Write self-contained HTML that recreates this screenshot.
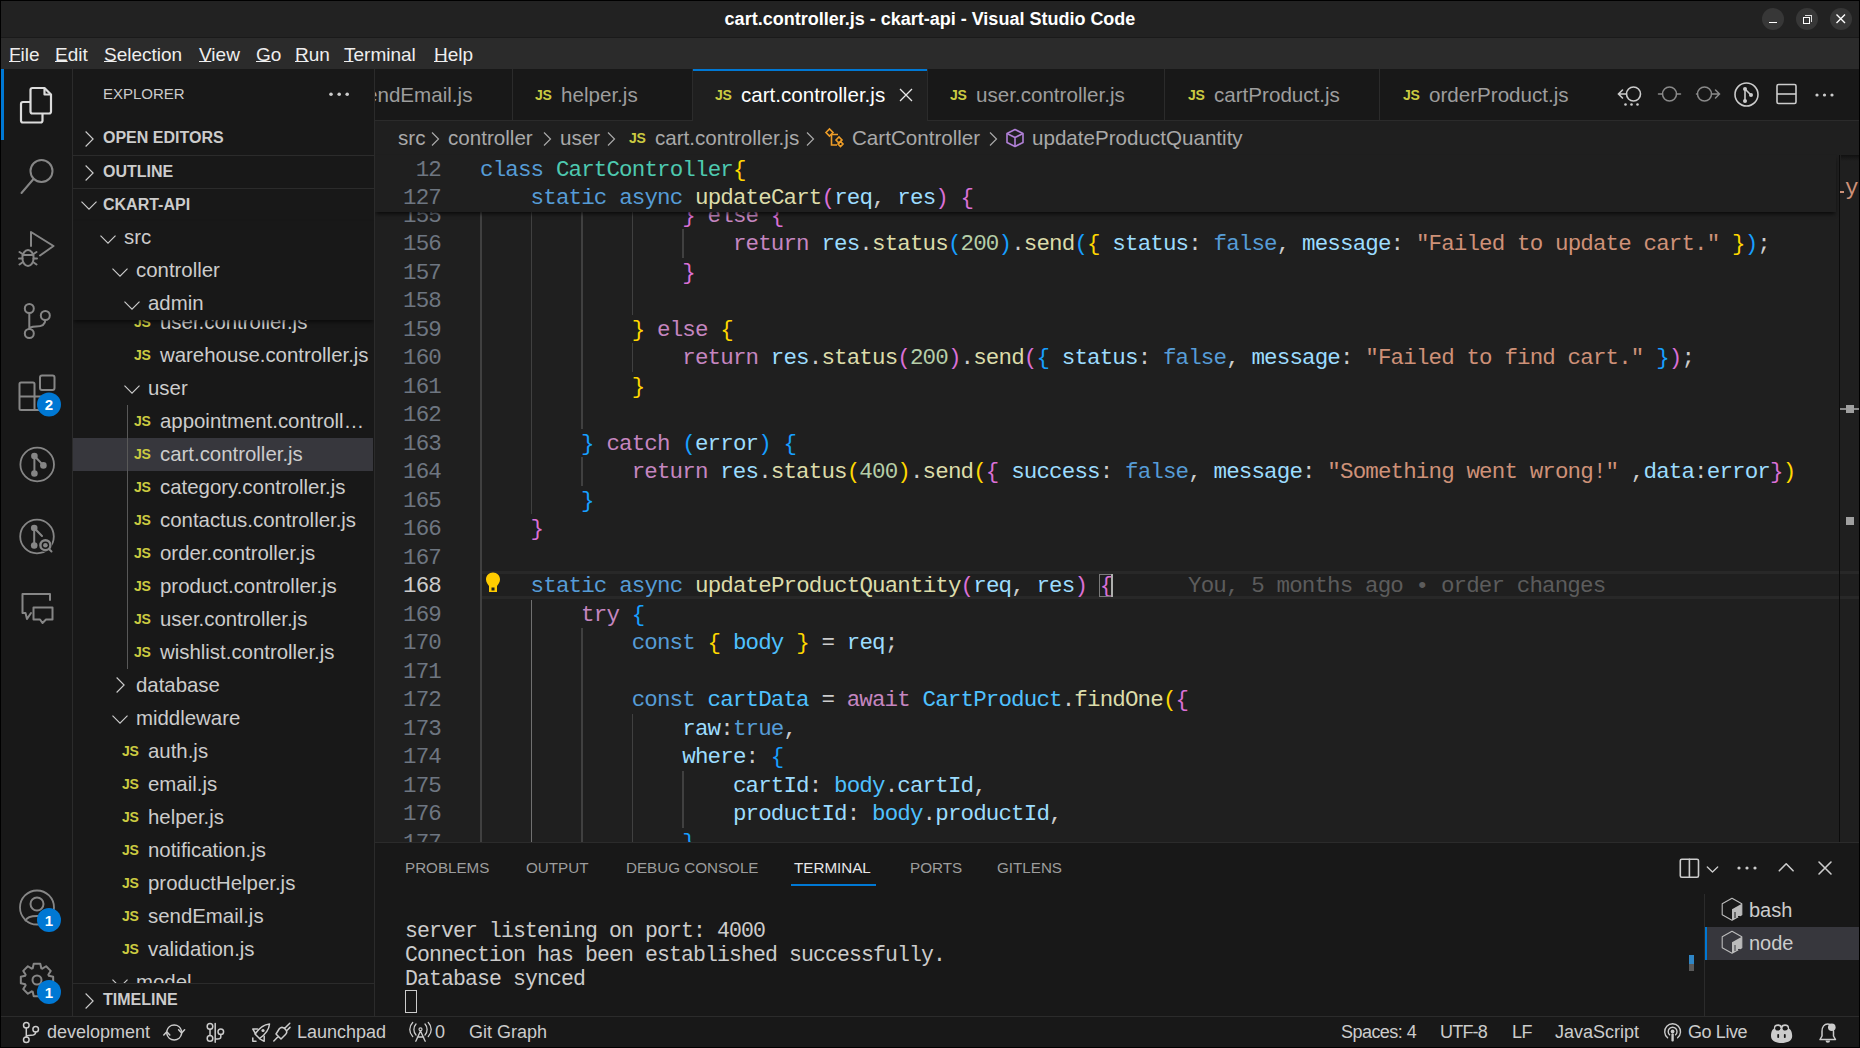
<!DOCTYPE html>
<html><head><meta charset="utf-8"><style>
*{margin:0;padding:0;box-sizing:border-box}
html,body{width:1860px;height:1048px;overflow:hidden;background:#000;font-family:"Liberation Sans",sans-serif;color:#cccccc;position:relative}
.abs{position:absolute}
#title{position:absolute;left:1px;top:1px;width:1858px;height:36px;background:#222222}
#menubar{position:absolute;left:1px;top:38px;width:1858px;height:31px;background:#2b2b2b}
.mi{position:absolute;top:0.8px;height:31px;line-height:31px;font-size:19px;color:#eeeeee}
.mi u{text-decoration:underline;text-underline-offset:0px;text-decoration-thickness:1px}
#act{position:absolute;left:1px;top:69px;width:72px;height:947px;background:#181818;border-right:1px solid #2b2b2b}
#side{position:absolute;left:73px;top:69px;width:302px;height:947px;background:#181818;border-right:1px solid #2b2b2b;overflow:hidden}
#editor{position:absolute;left:375px;top:69px;width:1484px;height:773px;background:#1f1f1f;overflow:hidden}
#panel{position:absolute;left:375px;top:842px;width:1484px;height:174px;background:#181818;border-top:1px solid #2b2b2b}
#status{position:absolute;left:1px;top:1016px;width:1858px;height:31px;background:#181818;border-top:1px solid #2b2b2b}
.ln{position:absolute;left:0;width:441px;transform:translateY(1.2px);text-align:right;height:28.5px;line-height:28.5px;font-family:"Liberation Mono",monospace;font-size:22.5px;letter-spacing:-0.857px;color:#6e7681}
.cl{position:absolute;transform:translateY(1.2px);height:28.5px;line-height:28.5px;font-family:"Liberation Mono",monospace;font-size:22.5px;letter-spacing:-0.857px;color:#cccccc;white-space:pre}
.ig{position:absolute;width:1.5px;height:28.5px}
.tl{position:absolute;height:33px;line-height:33px;font-size:20.4px;color:#cccccc;white-space:pre}
.jsi{position:absolute;font-size:14px;font-weight:bold;color:#cbcb41;line-height:18px;height:18px;letter-spacing:-0.4px}
.chev{position:absolute;width:16px;height:16px}
.chev svg{display:block}
.sech{position:absolute;left:0;width:301px;height:33px;font-size:16px;font-weight:bold;line-height:33px;color:#cccccc}
.term{position:absolute;font-family:"Liberation Mono",monospace;font-size:21.5px;letter-spacing:-0.9px;line-height:24px;color:#cccccc;white-space:pre}
</style></head><body>
<div id="title">
  <div class="abs" style="left:0;width:1858px;top:0;height:36px;line-height:36px;text-align:center;font-weight:bold;font-size:18px;color:#ffffff">cart.controller.js - ckart-api - Visual Studio Code</div>
  <div class="abs" style="left:1761px;top:7px;width:22px;height:22px;border-radius:50%;background:#373737"></div>
  <div class="abs" style="left:1768px;top:20.5px;width:8px;height:1.2px;background:#fff"></div>
  <div class="abs" style="left:1795px;top:7px;width:22px;height:22px;border-radius:50%;background:#373737"></div>
  <div class="abs" style="left:1802px;top:16px;width:7px;height:7px;border:1.3px solid #fff"></div>
  <div class="abs" style="left:1804px;top:14px;width:7px;height:7px;border-top:1px solid #ddd;border-right:1px solid #ddd"></div>
  <div class="abs" style="left:1829px;top:7px;width:22px;height:22px;border-radius:50%;background:#373737"></div>
  <svg class="abs" style="left:1834px;top:12px" width="12" height="12" viewBox="0 0 12 12"><path d="M1.5 1.5L10 10M10 1.5L1.5 10" stroke="#fff" stroke-width="1.4"/></svg>
</div>
<div class="abs" style="left:1px;top:37px;width:1858px;height:1px;background:#1a1a1a"></div>
<div id="menubar">
  <div class="mi" style="left:8px"><u>F</u>ile</div>
  <div class="mi" style="left:54px"><u>E</u>dit</div>
  <div class="mi" style="left:103px"><u>S</u>election</div>
  <div class="mi" style="left:198px"><u>V</u>iew</div>
  <div class="mi" style="left:255px"><u>G</u>o</div>
  <div class="mi" style="left:294px"><u>R</u>un</div>
  <div class="mi" style="left:343px"><u>T</u>erminal</div>
  <div class="mi" style="left:433px"><u>H</u>elp</div>
</div>
<div id="act">
  <div class="abs" style="left:0;top:0;width:3px;height:71px;background:#0078d4"></div>
</div>
<div id="side">
  <div class="abs" style="left:30px;top:0;height:50px;line-height:50px;font-size:15px;color:#cccccc">EXPLORER</div>
  <svg class="abs" style="left:250px;top:18px" width="30" height="14" viewBox="0 0 30 14"><g fill="#cccccc"><circle cx="8" cy="7.2" r="1.8"/><circle cx="16.2" cy="7.2" r="1.8"/><circle cx="24.2" cy="7.2" r="1.8"/></g></svg>
  <div class="sech" style="top:52px"><div class="chev" style="left:7.5px;top:10px"><svg width="16" height="16" viewBox="0 0 16 16"><path d="M4.6 0.5 L12.1 8 L4.6 15.5" fill="none" stroke="#cccccc" stroke-width="1.15"/></svg></div><span style="position:absolute;left:30px">OPEN EDITORS</span></div>
  <div class="sech" style="top:86px;border-top:1px solid #2b2b2b"><div class="chev" style="left:7.5px;top:8.5px"><svg width="16" height="16" viewBox="0 0 16 16"><path d="M4.6 0.5 L12.1 8 L4.6 15.5" fill="none" stroke="#cccccc" stroke-width="1.15"/></svg></div><span style="position:absolute;left:30px;top:-1px">OUTLINE</span></div>
  <div class="sech" style="top:119px;border-top:1px solid #2b2b2b"><div class="chev" style="left:7.5px;top:7px"><svg width="16" height="16" viewBox="0 0 16 16"><path d="M0.5 5.6 L8 13.1 L15.5 5.6" fill="none" stroke="#cccccc" stroke-width="1.15"/></svg></div><span style="position:absolute;left:30px;top:-1px">CKART-API</span></div>
  <div class="abs" style="left:0;top:0;width:300px;height:947px">
    <div class="abs" style="left:0;top:369px;width:300px;height:33px;background:#37373d"></div>
    <div class="abs" style="left:54px;top:336px;width:1px;height:264px;background:#585858"></div>
    <div class="abs" style="left:-73px;top:-69px"><div class="jsi" style="left:134px;top:313px">JS</div><div class="tl" style="left:160px;top:305.5px">user.controller.js</div><div class="jsi" style="left:134px;top:346px">JS</div><div class="tl" style="left:160px;top:338.5px">warehouse.controller.js</div><div class="chev" style="left:124px;top:380px"><svg width="16" height="16" viewBox="0 0 16 16"><path d="M0.5 5.6 L8 13.1 L15.5 5.6" fill="none" stroke="#cccccc" stroke-width="1.15"/></svg></div><div class="tl" style="left:148px;top:371.5px">user</div><div class="jsi" style="left:134px;top:412px">JS</div><div class="tl" style="left:160px;top:404.5px">appointment.controll…</div><div class="jsi" style="left:134px;top:445px">JS</div><div class="tl" style="left:160px;top:437.5px">cart.controller.js</div><div class="jsi" style="left:134px;top:478px">JS</div><div class="tl" style="left:160px;top:470.5px">category.controller.js</div><div class="jsi" style="left:134px;top:511px">JS</div><div class="tl" style="left:160px;top:503.5px">contactus.controller.js</div><div class="jsi" style="left:134px;top:544px">JS</div><div class="tl" style="left:160px;top:536.5px">order.controller.js</div><div class="jsi" style="left:134px;top:577px">JS</div><div class="tl" style="left:160px;top:569.5px">product.controller.js</div><div class="jsi" style="left:134px;top:610px">JS</div><div class="tl" style="left:160px;top:602.5px">user.controller.js</div><div class="jsi" style="left:134px;top:643px">JS</div><div class="tl" style="left:160px;top:635.5px">wishlist.controller.js</div><div class="chev" style="left:112px;top:677px"><svg width="16" height="16" viewBox="0 0 16 16"><path d="M4.6 0.5 L12.1 8 L4.6 15.5" fill="none" stroke="#cccccc" stroke-width="1.15"/></svg></div><div class="tl" style="left:136px;top:668.5px">database</div><div class="chev" style="left:112px;top:710px"><svg width="16" height="16" viewBox="0 0 16 16"><path d="M0.5 5.6 L8 13.1 L15.5 5.6" fill="none" stroke="#cccccc" stroke-width="1.15"/></svg></div><div class="tl" style="left:136px;top:701.5px">middleware</div><div class="jsi" style="left:122px;top:742px">JS</div><div class="tl" style="left:148px;top:734.5px">auth.js</div><div class="jsi" style="left:122px;top:775px">JS</div><div class="tl" style="left:148px;top:767.5px">email.js</div><div class="jsi" style="left:122px;top:808px">JS</div><div class="tl" style="left:148px;top:800.5px">helper.js</div><div class="jsi" style="left:122px;top:841px">JS</div><div class="tl" style="left:148px;top:833.5px">notification.js</div><div class="jsi" style="left:122px;top:874px">JS</div><div class="tl" style="left:148px;top:866.5px">productHelper.js</div><div class="jsi" style="left:122px;top:907px">JS</div><div class="tl" style="left:148px;top:899.5px">sendEmail.js</div><div class="jsi" style="left:122px;top:940px">JS</div><div class="tl" style="left:148px;top:932.5px">validation.js</div><div class="chev" style="left:112px;top:974px"><svg width="16" height="16" viewBox="0 0 16 16"><path d="M0.5 5.6 L8 13.1 L15.5 5.6" fill="none" stroke="#cccccc" stroke-width="1.15"/></svg></div><div class="tl" style="left:136px;top:965.5px">model</div></div>
  </div>
  <div class="abs" style="left:0;top:152px;width:301px;height:99px;background:#181818;box-shadow:0 3px 4px -1px rgba(0,0,0,0.6)">
    <div class="abs" style="left:-73px;top:-221px"><div class="chev" style="left:99.5px;top:229.5px"><svg width="16" height="16" viewBox="0 0 16 16"><path d="M0.5 5.6 L8 13.1 L15.5 5.6" fill="none" stroke="#cccccc" stroke-width="1.15"/></svg></div><div class="tl" style="left:124px;top:221.0px">src</div><div class="chev" style="left:112px;top:262.5px"><svg width="16" height="16" viewBox="0 0 16 16"><path d="M0.5 5.6 L8 13.1 L15.5 5.6" fill="none" stroke="#cccccc" stroke-width="1.15"/></svg></div><div class="tl" style="left:136px;top:254.0px">controller</div><div class="chev" style="left:124px;top:295.5px"><svg width="16" height="16" viewBox="0 0 16 16"><path d="M0.5 5.6 L8 13.1 L15.5 5.6" fill="none" stroke="#cccccc" stroke-width="1.15"/></svg></div><div class="tl" style="left:148px;top:287.0px">admin</div></div>
  </div>
  <div class="sech" style="top:914px;background:#181818;border-top:1px solid #2b2b2b"><div class="chev" style="left:7.5px;top:8.5px"><svg width="16" height="16" viewBox="0 0 16 16"><path d="M4.6 0.5 L12.1 8 L4.6 15.5" fill="none" stroke="#cccccc" stroke-width="1.15"/></svg></div><span style="position:absolute;left:30px;top:-1px">TIMELINE</span></div>
</div>
<div id="editor">
  <div class="abs" style="left:0;top:0;width:1485px;height:773px">
    <div class="abs" style="left:-375px;top:-69px">
      <div class="abs" style="left:482px;top:571px;width:1357px;height:28px;border-top:3px solid #282828;border-bottom:3px solid #282828"></div>
      <div class="ig" style="left:480.0px;top:200.5px;background:#404040"></div>
<div class="ig" style="left:530.6px;top:200.5px;background:#404040"></div>
<div class="ig" style="left:581.1px;top:200.5px;background:#404040"></div>
<div class="ig" style="left:631.7px;top:200.5px;background:#404040"></div>
<div class="ln" style="top:200.5px;color:#6e7681">155</div>
<div class="cl" style="top:200.5px;left:682.3px"><span style="color:#da70d6">}</span> <span style="color:#c586c0">else</span> <span style="color:#da70d6">{</span></div>
<div class="ig" style="left:480.0px;top:229.0px;background:#404040"></div>
<div class="ig" style="left:530.6px;top:229.0px;background:#404040"></div>
<div class="ig" style="left:581.1px;top:229.0px;background:#404040"></div>
<div class="ig" style="left:631.7px;top:229.0px;background:#404040"></div>
<div class="ig" style="left:682.3px;top:229.0px;background:#404040"></div>
<div class="ln" style="top:229.0px;color:#6e7681">156</div>
<div class="cl" style="top:229.0px;left:732.9px"><span style="color:#c586c0">return</span> <span style="color:#9cdcfe">res</span>.<span style="color:#dcdcaa">status</span><span style="color:#179fff">(</span><span style="color:#b5cea8">200</span><span style="color:#179fff">)</span>.<span style="color:#dcdcaa">send</span><span style="color:#179fff">(</span><span style="color:#ffd700">{</span> <span style="color:#9cdcfe">status</span>: <span style="color:#569cd6">false</span>, <span style="color:#9cdcfe">message</span>: <span style="color:#ce9178">&quot;Failed to update cart.&quot;</span> <span style="color:#ffd700">}</span><span style="color:#179fff">)</span>;</div>
<div class="ig" style="left:480.0px;top:257.5px;background:#404040"></div>
<div class="ig" style="left:530.6px;top:257.5px;background:#404040"></div>
<div class="ig" style="left:581.1px;top:257.5px;background:#404040"></div>
<div class="ig" style="left:631.7px;top:257.5px;background:#404040"></div>
<div class="ln" style="top:257.5px;color:#6e7681">157</div>
<div class="cl" style="top:257.5px;left:682.3px"><span style="color:#da70d6">}</span></div>
<div class="ig" style="left:480.0px;top:286.0px;background:#404040"></div>
<div class="ig" style="left:530.6px;top:286.0px;background:#404040"></div>
<div class="ig" style="left:581.1px;top:286.0px;background:#404040"></div>
<div class="ig" style="left:631.7px;top:286.0px;background:#404040"></div>
<div class="ln" style="top:286.0px;color:#6e7681">158</div>
<div class="cl" style="top:286.0px;left:480.0px"></div>
<div class="ig" style="left:480.0px;top:314.5px;background:#404040"></div>
<div class="ig" style="left:530.6px;top:314.5px;background:#404040"></div>
<div class="ig" style="left:581.1px;top:314.5px;background:#404040"></div>
<div class="ln" style="top:314.5px;color:#6e7681">159</div>
<div class="cl" style="top:314.5px;left:631.7px"><span style="color:#ffd700">}</span> <span style="color:#c586c0">else</span> <span style="color:#ffd700">{</span></div>
<div class="ig" style="left:480.0px;top:343.0px;background:#404040"></div>
<div class="ig" style="left:530.6px;top:343.0px;background:#404040"></div>
<div class="ig" style="left:581.1px;top:343.0px;background:#404040"></div>
<div class="ig" style="left:631.7px;top:343.0px;background:#404040"></div>
<div class="ln" style="top:343.0px;color:#6e7681">160</div>
<div class="cl" style="top:343.0px;left:682.3px"><span style="color:#c586c0">return</span> <span style="color:#9cdcfe">res</span>.<span style="color:#dcdcaa">status</span><span style="color:#da70d6">(</span><span style="color:#b5cea8">200</span><span style="color:#da70d6">)</span>.<span style="color:#dcdcaa">send</span><span style="color:#da70d6">(</span><span style="color:#179fff">{</span> <span style="color:#9cdcfe">status</span>: <span style="color:#569cd6">false</span>, <span style="color:#9cdcfe">message</span>: <span style="color:#ce9178">&quot;Failed to find cart.&quot;</span> <span style="color:#179fff">}</span><span style="color:#da70d6">)</span>;</div>
<div class="ig" style="left:480.0px;top:371.5px;background:#404040"></div>
<div class="ig" style="left:530.6px;top:371.5px;background:#404040"></div>
<div class="ig" style="left:581.1px;top:371.5px;background:#404040"></div>
<div class="ln" style="top:371.5px;color:#6e7681">161</div>
<div class="cl" style="top:371.5px;left:631.7px"><span style="color:#ffd700">}</span></div>
<div class="ig" style="left:480.0px;top:400.0px;background:#404040"></div>
<div class="ig" style="left:530.6px;top:400.0px;background:#404040"></div>
<div class="ig" style="left:581.1px;top:400.0px;background:#404040"></div>
<div class="ln" style="top:400.0px;color:#6e7681">162</div>
<div class="cl" style="top:400.0px;left:480.0px"></div>
<div class="ig" style="left:480.0px;top:428.5px;background:#404040"></div>
<div class="ig" style="left:530.6px;top:428.5px;background:#404040"></div>
<div class="ln" style="top:428.5px;color:#6e7681">163</div>
<div class="cl" style="top:428.5px;left:581.1px"><span style="color:#179fff">}</span> <span style="color:#c586c0">catch</span> <span style="color:#179fff">(</span><span style="color:#9cdcfe">error</span><span style="color:#179fff">)</span> <span style="color:#179fff">{</span></div>
<div class="ig" style="left:480.0px;top:457.0px;background:#404040"></div>
<div class="ig" style="left:530.6px;top:457.0px;background:#404040"></div>
<div class="ig" style="left:581.1px;top:457.0px;background:#404040"></div>
<div class="ln" style="top:457.0px;color:#6e7681">164</div>
<div class="cl" style="top:457.0px;left:631.7px"><span style="color:#c586c0">return</span> <span style="color:#9cdcfe">res</span>.<span style="color:#dcdcaa">status</span><span style="color:#ffd700">(</span><span style="color:#b5cea8">400</span><span style="color:#ffd700">)</span>.<span style="color:#dcdcaa">send</span><span style="color:#ffd700">(</span><span style="color:#da70d6">{</span> <span style="color:#9cdcfe">success</span>: <span style="color:#569cd6">false</span>, <span style="color:#9cdcfe">message</span>: <span style="color:#ce9178">&quot;Something went wrong!&quot;</span> ,<span style="color:#9cdcfe">data</span>:<span style="color:#9cdcfe">error</span><span style="color:#da70d6">}</span><span style="color:#ffd700">)</span></div>
<div class="ig" style="left:480.0px;top:485.5px;background:#404040"></div>
<div class="ig" style="left:530.6px;top:485.5px;background:#404040"></div>
<div class="ln" style="top:485.5px;color:#6e7681">165</div>
<div class="cl" style="top:485.5px;left:581.1px"><span style="color:#179fff">}</span></div>
<div class="ig" style="left:480.0px;top:514.0px;background:#404040"></div>
<div class="ln" style="top:514.0px;color:#6e7681">166</div>
<div class="cl" style="top:514.0px;left:530.6px"><span style="color:#da70d6">}</span></div>
<div class="ig" style="left:480.0px;top:542.5px;background:#404040"></div>
<div class="ln" style="top:542.5px;color:#6e7681">167</div>
<div class="cl" style="top:542.5px;left:480.0px"></div>
<div class="ig" style="left:480.0px;top:571.0px;background:#404040"></div>
<div class="ln" style="top:571.0px;color:#cccccc">168</div>
<div class="cl" style="top:571.0px;left:530.6px"><span style="color:#569cd6">static</span> <span style="color:#569cd6">async</span> <span style="color:#dcdcaa">updateProductQuantity</span><span style="color:#da70d6">(</span><span style="color:#9cdcfe">req</span>, <span style="color:#9cdcfe">res</span><span style="color:#da70d6">)</span> <span style="color:#da70d6">{</span></div>
<div class="ig" style="left:480.0px;top:599.5px;background:#404040"></div>
<div class="ig" style="left:530.6px;top:599.5px;background:#707070"></div>
<div class="ln" style="top:599.5px;color:#6e7681">169</div>
<div class="cl" style="top:599.5px;left:581.1px"><span style="color:#c586c0">try</span> <span style="color:#179fff">{</span></div>
<div class="ig" style="left:480.0px;top:628.0px;background:#404040"></div>
<div class="ig" style="left:530.6px;top:628.0px;background:#707070"></div>
<div class="ig" style="left:581.1px;top:628.0px;background:#404040"></div>
<div class="ln" style="top:628.0px;color:#6e7681">170</div>
<div class="cl" style="top:628.0px;left:631.7px"><span style="color:#569cd6">const</span> <span style="color:#ffd700">{</span> <span style="color:#4fc1ff">body</span> <span style="color:#ffd700">}</span> = <span style="color:#9cdcfe">req</span>;</div>
<div class="ig" style="left:480.0px;top:656.5px;background:#404040"></div>
<div class="ig" style="left:530.6px;top:656.5px;background:#707070"></div>
<div class="ig" style="left:581.1px;top:656.5px;background:#404040"></div>
<div class="ln" style="top:656.5px;color:#6e7681">171</div>
<div class="cl" style="top:656.5px;left:480.0px"></div>
<div class="ig" style="left:480.0px;top:685.0px;background:#404040"></div>
<div class="ig" style="left:530.6px;top:685.0px;background:#707070"></div>
<div class="ig" style="left:581.1px;top:685.0px;background:#404040"></div>
<div class="ln" style="top:685.0px;color:#6e7681">172</div>
<div class="cl" style="top:685.0px;left:631.7px"><span style="color:#569cd6">const</span> <span style="color:#4fc1ff">cartData</span> = <span style="color:#c586c0">await</span> <span style="color:#4fc1ff">CartProduct</span>.<span style="color:#dcdcaa">findOne</span><span style="color:#ffd700">(</span><span style="color:#da70d6">{</span></div>
<div class="ig" style="left:480.0px;top:713.5px;background:#404040"></div>
<div class="ig" style="left:530.6px;top:713.5px;background:#707070"></div>
<div class="ig" style="left:581.1px;top:713.5px;background:#404040"></div>
<div class="ig" style="left:631.7px;top:713.5px;background:#404040"></div>
<div class="ln" style="top:713.5px;color:#6e7681">173</div>
<div class="cl" style="top:713.5px;left:682.3px"><span style="color:#9cdcfe">raw</span>:<span style="color:#569cd6">true</span>,</div>
<div class="ig" style="left:480.0px;top:742.0px;background:#404040"></div>
<div class="ig" style="left:530.6px;top:742.0px;background:#707070"></div>
<div class="ig" style="left:581.1px;top:742.0px;background:#404040"></div>
<div class="ig" style="left:631.7px;top:742.0px;background:#404040"></div>
<div class="ln" style="top:742.0px;color:#6e7681">174</div>
<div class="cl" style="top:742.0px;left:682.3px"><span style="color:#9cdcfe">where</span>: <span style="color:#179fff">{</span></div>
<div class="ig" style="left:480.0px;top:770.5px;background:#404040"></div>
<div class="ig" style="left:530.6px;top:770.5px;background:#707070"></div>
<div class="ig" style="left:581.1px;top:770.5px;background:#404040"></div>
<div class="ig" style="left:631.7px;top:770.5px;background:#404040"></div>
<div class="ig" style="left:682.3px;top:770.5px;background:#404040"></div>
<div class="ln" style="top:770.5px;color:#6e7681">175</div>
<div class="cl" style="top:770.5px;left:732.9px"><span style="color:#9cdcfe">cartId</span>: <span style="color:#4fc1ff">body</span>.<span style="color:#9cdcfe">cartId</span>,</div>
<div class="ig" style="left:480.0px;top:799.0px;background:#404040"></div>
<div class="ig" style="left:530.6px;top:799.0px;background:#707070"></div>
<div class="ig" style="left:581.1px;top:799.0px;background:#404040"></div>
<div class="ig" style="left:631.7px;top:799.0px;background:#404040"></div>
<div class="ig" style="left:682.3px;top:799.0px;background:#404040"></div>
<div class="ln" style="top:799.0px;color:#6e7681">176</div>
<div class="cl" style="top:799.0px;left:732.9px"><span style="color:#9cdcfe">productId</span>: <span style="color:#4fc1ff">body</span>.<span style="color:#9cdcfe">productId</span>,</div>
<div class="ig" style="left:480.0px;top:827.5px;background:#404040"></div>
<div class="ig" style="left:530.6px;top:827.5px;background:#707070"></div>
<div class="ig" style="left:581.1px;top:827.5px;background:#404040"></div>
<div class="ig" style="left:631.7px;top:827.5px;background:#404040"></div>
<div class="ln" style="top:827.5px;color:#6e7681">177</div>
<div class="cl" style="top:827.5px;left:682.3px"><span style="color:#179fff">}</span></div>
      <div class="abs" style="left:1099px;top:574px;width:13px;height:23px;border:1px solid #7a7a7a"></div>
      <div class="abs" style="left:1111px;top:574px;width:2px;height:23px;background:#aeafad"></div>
      <div class="cl" style="left:1188px;top:571px;color:#5c5c5c">You, 5 months ago • order changes</div>
      <svg class="abs" style="left:484px;top:571px" width="18" height="26" viewBox="0 0 18 26"><path d="M9 1.5 C5 1.5 2 4.5 2 8.5 C2 11.5 4 13.5 5 15 V21 H13 V15 C14 13.5 16 11.5 16 8.5 C16 4.5 13 1.5 9 1.5 Z" fill="#ffcc00"/><rect x="7.5" y="16.5" width="3" height="3" fill="#1f1f1f"/></svg>
    </div>
  </div>
  <div class="abs" style="left:0;top:85.5px;width:1461px;height:57px;background:#1f1f1f;box-shadow:0 3px 4px -1px rgba(0,0,0,0.7)">
    <div class="abs" style="left:-375px;top:-154.5px">
<div class="ln" style="top:154.5px">12</div>
<div class="cl" style="top:154.5px;left:480px"><span style="color:#569cd6">class</span> <span style="color:#4ec9b0">CartController</span><span style="color:#ffd700">{</span></div>
<div class="ln" style="top:183px">127</div>
<div class="cl" style="top:183px;left:530.6px"><span style="color:#569cd6">static</span> <span style="color:#569cd6">async</span> <span style="color:#dcdcaa">updateCart</span><span style="color:#da70d6">(</span><span style="color:#9cdcfe">req</span>, <span style="color:#9cdcfe">res</span><span style="color:#da70d6">)</span> <span style="color:#da70d6">{</span></div>
</div>
  </div>
  <div class="abs" style="left:1464px;top:86px;width:20px;height:687px;background:#1f1f1f;border-left:1px solid #0c0c0c"></div>
  <div class="abs" style="left:1466px;top:86px;width:18px;height:6px;background:linear-gradient(#111,#1f1f1f)"></div>
  <div class="abs" style="left:1465px;top:502px;width:19px;height:28px;border-top:3px solid #282828;border-bottom:3px solid #282828"></div>
  <div class="cl" style="left:1470px;top:104px;color:#ce9178">y</div><div class="abs" style="left:1465px;top:122px;width:4px;height:1.5px;background:#ce9178"></div>
  <div class="abs" style="left:1465px;top:338.5px;width:19px;height:2.5px;background:#8a8a8a"></div>
  <div class="abs" style="left:1471px;top:336px;width:8px;height:8px;background:#a0a0a0"></div>
  <div class="abs" style="left:1471px;top:448px;width:8px;height:8px;background:#a0a0a0"></div>
</div>
<div class="abs" style="left:375px;top:69px;width:1484px;height:85px;background:#1f1f1f"></div>
<div class="abs" style="left:375px;top:69px;width:1484px;height:52px;background:#181818;border-bottom:1px solid #2b2b2b"></div>
<div class="abs" style="left:375px;top:69px;width:138px;height:52px;background:#181818;border-right:1px solid #2b2b2b;border-bottom:1px solid #2b2b2b;overflow:hidden"><div class="abs" style="left:-9px;top:0;height:52px;line-height:52px;font-size:20.6px;white-space:pre;color:#9d9d9d">endEmail.js</div></div><div class="abs" style="left:513px;top:69px;width:180px;height:52px;background:#181818;border-right:1px solid #2b2b2b;border-bottom:1px solid #2b2b2b;overflow:hidden"><div class="jsi" style="left:22px;top:17px">JS</div><div class="abs" style="left:48px;top:0;height:52px;line-height:52px;font-size:20.6px;white-space:pre;color:#9d9d9d">helper.js</div></div><div class="abs" style="left:693px;top:69px;width:235px;height:52px;background:#1f1f1f;border-right:1px solid #2b2b2b;overflow:hidden"><div class="abs" style="left:0;top:0;width:100%;height:2px;background:#0078d4"></div><div class="jsi" style="left:22px;top:17px">JS</div><div class="abs" style="left:48px;top:0;height:52px;line-height:52px;font-size:20.6px;white-space:pre;color:#ffffff">cart.controller.js</div><svg class="abs" style="left:205px;top:87px;margin-top:-69px" width="16" height="16" viewBox="0 0 16 16"><path d="M2 2 L14 14 M14 2 L2 14" stroke="#e8e8e8" stroke-width="1.3"/></svg></div><div class="abs" style="left:928px;top:69px;width:237px;height:52px;background:#181818;border-right:1px solid #2b2b2b;border-bottom:1px solid #2b2b2b;overflow:hidden"><div class="jsi" style="left:22px;top:17px">JS</div><div class="abs" style="left:48px;top:0;height:52px;line-height:52px;font-size:20.6px;white-space:pre;color:#9d9d9d">user.controller.js</div></div><div class="abs" style="left:1165px;top:69px;width:215px;height:52px;background:#181818;border-right:1px solid #2b2b2b;border-bottom:1px solid #2b2b2b;overflow:hidden"><div class="jsi" style="left:23px;top:17px">JS</div><div class="abs" style="left:49px;top:0;height:52px;line-height:52px;font-size:20.6px;white-space:pre;color:#9d9d9d">cartProduct.js</div></div><div class="abs" style="left:1380px;top:69px;width:213px;height:52px;background:#181818;border-right:none;border-bottom:1px solid #2b2b2b;overflow:hidden"><div class="jsi" style="left:23px;top:17px">JS</div><div class="abs" style="left:49px;top:0;height:52px;line-height:52px;font-size:20.6px;white-space:pre;color:#9d9d9d">orderProduct.js</div></div>

<svg class="abs" style="left:1600px;top:69px" width="259" height="52" viewBox="1600 69 259 52">
 <g fill="none" stroke="#cccccc" stroke-width="1.6" stroke-linecap="round">
  <circle cx="1633.5" cy="94" r="7"/><path d="M1626.5 94 H1618.5 M1622.5 90 L1618.5 94 L1622.5 98"/>
 </g>
 <g fill="#cccccc"><circle cx="1625.5" cy="104.5" r="1.3"/><circle cx="1631.5" cy="104.5" r="1.3"/><circle cx="1637.5" cy="104.5" r="1.3"/></g>
 <g fill="none" stroke="#8a8a8a" stroke-width="1.5" stroke-linecap="round">
  <circle cx="1669.5" cy="94" r="7"/><path d="M1658.5 94 H1662.5 M1676.5 94 H1680.5"/>
  <circle cx="1704.5" cy="94" r="7"/><path d="M1696.5 94 H1697.5 M1711.5 94 H1719.5 M1715.5 90 L1719.5 94 L1715.5 98"/>
 </g>
 <g fill="none" stroke="#cccccc" stroke-width="1.6">
  <circle cx="1746.5" cy="94.5" r="11.5"/>
  <path d="M1745 89 V101 M1745 89 L1751 95"/>
  <rect x="1777" y="84.5" width="19" height="19" rx="1.5"/><path d="M1777 94 H1796"/>
 </g>
 <g fill="#cccccc"><circle cx="1745" cy="89" r="2"/><circle cx="1751" cy="95" r="2"/><circle cx="1745" cy="101" r="2"/>
  <circle cx="1817" cy="95" r="1.6"/><circle cx="1824.5" cy="95" r="1.6"/><circle cx="1832" cy="95" r="1.6"/></g>
</svg>
<div class="abs" style="left:398px;top:121.3px;height:33px;line-height:33px;font-size:20.6px;color:#a9a9a9;white-space:pre">src</div><svg class="abs" style="left:428.5px;top:130.5px" width="12" height="16" viewBox="0 0 12 16"><path d="M3 1.5 L9.5 8 L3 14.5" fill="none" stroke="#a9a9a9" stroke-width="1.2"/></svg><div class="abs" style="left:448px;top:121.3px;height:33px;line-height:33px;font-size:20.6px;color:#a9a9a9;white-space:pre">controller</div><svg class="abs" style="left:540.5px;top:130.5px" width="12" height="16" viewBox="0 0 12 16"><path d="M3 1.5 L9.5 8 L3 14.5" fill="none" stroke="#a9a9a9" stroke-width="1.2"/></svg><div class="abs" style="left:560px;top:121.3px;height:33px;line-height:33px;font-size:20.6px;color:#a9a9a9;white-space:pre">user</div><svg class="abs" style="left:604.5px;top:130.5px" width="12" height="16" viewBox="0 0 12 16"><path d="M3 1.5 L9.5 8 L3 14.5" fill="none" stroke="#a9a9a9" stroke-width="1.2"/></svg><div class="jsi" style="left:629px;top:129px">JS</div><div class="abs" style="left:655px;top:121.3px;height:33px;line-height:33px;font-size:20.6px;color:#a9a9a9;white-space:pre">cart.controller.js</div><svg class="abs" style="left:803.7px;top:130.5px" width="12" height="16" viewBox="0 0 12 16"><path d="M3 1.5 L9.5 8 L3 14.5" fill="none" stroke="#a9a9a9" stroke-width="1.2"/></svg><div class="abs" style="left:852px;top:121.3px;height:33px;line-height:33px;font-size:20.6px;color:#a9a9a9;white-space:pre">CartController</div><svg class="abs" style="left:986.5px;top:130.5px" width="12" height="16" viewBox="0 0 12 16"><path d="M3 1.5 L9.5 8 L3 14.5" fill="none" stroke="#a9a9a9" stroke-width="1.2"/></svg><div class="abs" style="left:1032px;top:121.3px;height:33px;line-height:33px;font-size:20.6px;color:#a9a9a9;white-space:pre">updateProductQuantity</div><svg class="abs" style="left:824px;top:127px" width="22" height="22" viewBox="0 0 22 22"><g fill="none" stroke="#ee9d28" stroke-width="1.6"><path d="M2 5.5 L5.5 2 L9 5.5 L5.5 9 Z"/><path d="M12 13 L15 10 L18 13 L15 16 Z"/><path d="M12 19 L14.5 16.5 L17 19 L14.5 21.5 Z" transform="translate(2 -2)"/><path d="M7.5 7.5 H14 M7.5 7.5 V18 H13"/></g></svg>
<svg class="abs" style="left:1004px;top:127px" width="22" height="22" viewBox="0 0 22 22"><g fill="none" stroke="#b180d7" stroke-width="1.6" stroke-linejoin="round"><path d="M11 2.5 L19 6.5 V15.5 L11 19.5 L3 15.5 V6.5 Z"/><path d="M3 6.5 L11 10.5 L19 6.5 M11 10.5 V19.5"/></g></svg>
<div id="panel"></div>
<div class="abs" style="left:405px;top:843px;height:50px;line-height:50px;font-size:15.2px;color:#9d9d9d;white-space:pre">PROBLEMS</div><div class="abs" style="left:526px;top:843px;height:50px;line-height:50px;font-size:15.2px;color:#9d9d9d;white-space:pre">OUTPUT</div><div class="abs" style="left:626px;top:843px;height:50px;line-height:50px;font-size:15.2px;color:#9d9d9d;white-space:pre">DEBUG CONSOLE</div><div class="abs" style="left:794px;top:843px;height:50px;line-height:50px;font-size:15.2px;color:#e7e7e7;white-space:pre">TERMINAL</div><div class="abs" style="left:910px;top:843px;height:50px;line-height:50px;font-size:15.2px;color:#9d9d9d;white-space:pre">PORTS</div><div class="abs" style="left:997px;top:843px;height:50px;line-height:50px;font-size:15.2px;color:#9d9d9d;white-space:pre">GITLENS</div><div class="abs" style="left:791px;top:884px;width:85px;height:2px;background:#0078d4"></div><div class="term" style="left:405px;top:918.5px">server listening on port: 4000</div><div class="term" style="left:405px;top:942.5px">Connection has been established successfully.</div><div class="term" style="left:405px;top:966.5px">Database synced</div><div class="abs" style="left:405px;top:990px;width:12px;height:23px;border:1.5px solid #cccccc"></div><div class="abs" style="left:1704px;top:894px;width:1px;height:122px;background:#2b2b2b"></div><div class="abs" style="left:1705px;top:927px;width:154px;height:33px;background:#37373d"></div><div class="abs" style="left:1705px;top:927px;width:2px;height:33px;background:#0078d4"></div><div class="abs" style="left:1749px;top:894px;height:33px;line-height:33px;font-size:20px;color:#cccccc">bash</div><div class="abs" style="left:1749px;top:927px;height:33px;line-height:33px;font-size:20px;color:#cccccc">node</div><div class="abs" style="left:1689px;top:955px;width:5px;height:9px;background:#2f86c6"></div><div class="abs" style="left:1689px;top:964px;width:5px;height:7px;background:#5a5a5a"></div>

<svg class="abs" style="left:1640px;top:843px" width="219" height="173" viewBox="1640 843 219 173">
 <g fill="none" stroke="#cccccc" stroke-width="1.6" stroke-linecap="round" stroke-linejoin="round">
  <rect x="1680.3" y="859.3" width="18.2" height="18" rx="1.5"/><path d="M1689.4 859.3 V877.3"/>
  <path d="M1707.3 867 L1712.5 872 L1717.7 867" stroke-width="1.3"/>
  <path d="M1779.3 870.8 L1786.2 863.8 L1793.1 870.8"/>
  <path d="M1819 862 L1831 874 M1831 862 L1819 874"/>
  <path d="M1732 898.3 L1722.2 903.8 V914.8 L1732 920.3 L1741.8 914.8 V903.8 Z" stroke="#bbbbbb" stroke-width="1.1"/>
  <path d="M1732 931.3 L1722.2 936.8 V947.8 L1732 953.3 L1741.8 947.8 V936.8 Z" stroke="#bbbbbb" stroke-width="1.1"/>
 </g>
 <g fill="#bbbbbb"><path d="M1741.8 903.8 V914.8 L1732 920.3 V909.3 Z"/><path d="M1741.8 936.8 V947.8 L1732 953.3 V942.3 Z"/></g><g stroke="#181818" stroke-width="1" fill="none"><path d="M1735 912 V918 M1738 916.5 H1740"/></g><g stroke="#37373d" stroke-width="1" fill="none"><path d="M1735 945 V951 M1738 949.5 H1740"/></g>
 <g fill="#cccccc"><circle cx="1739" cy="868" r="1.6"/><circle cx="1747" cy="868" r="1.6"/><circle cx="1755" cy="868" r="1.6"/></g>
</svg>
<div id="status"></div>
<div class="abs" style="left:47px;top:1018px;height:29px;line-height:29px;font-size:18px;letter-spacing:0px;color:#cccccc;white-space:pre">development</div><div class="abs" style="left:297px;top:1018px;height:29px;line-height:29px;font-size:18px;letter-spacing:0px;color:#cccccc;white-space:pre">Launchpad</div><div class="abs" style="left:435px;top:1018px;height:29px;line-height:29px;font-size:18px;letter-spacing:0px;color:#cccccc;white-space:pre">0</div><div class="abs" style="left:469px;top:1018px;height:29px;line-height:29px;font-size:18px;letter-spacing:0px;color:#cccccc;white-space:pre">Git Graph</div><div class="abs" style="left:1341px;top:1018px;height:29px;line-height:29px;font-size:18px;letter-spacing:-0.55px;color:#cccccc;white-space:pre">Spaces: 4</div><div class="abs" style="left:1440px;top:1018px;height:29px;line-height:29px;font-size:18px;letter-spacing:-0.8px;color:#cccccc;white-space:pre">UTF-8</div><div class="abs" style="left:1512px;top:1018px;height:29px;line-height:29px;font-size:18px;letter-spacing:-0.6px;color:#cccccc;white-space:pre">LF</div><div class="abs" style="left:1555px;top:1018px;height:29px;line-height:29px;font-size:18px;letter-spacing:0px;color:#cccccc;white-space:pre">JavaScript</div><div class="abs" style="left:1688px;top:1018px;height:29px;line-height:29px;font-size:18px;letter-spacing:-0.4px;color:#cccccc;white-space:pre">Go Live</div>

<svg class="abs" style="left:0;top:1017px" width="1860" height="30" viewBox="0 1017 1860 30">
 <g fill="none" stroke="#cccccc" stroke-width="1.5" stroke-linecap="round" stroke-linejoin="round">
  <circle cx="26.3" cy="1025.2" r="2.8"/><circle cx="26.3" cy="1039.7" r="2.8"/><circle cx="35.7" cy="1029.2" r="2.8"/>
  <path d="M26.3 1028 V1036.9 M35.7 1032 C35.7 1034.5 34 1035.3 31 1035.3 C28 1035.3 26.3 1036 26.3 1037"/>
  <path d="M166.8 1031.2 A7.5 7.5 0 0 1 181.6 1031.2 M181.6 1033.6 A7.5 7.5 0 0 1 166.8 1033.6"/>
  <path d="M178.6 1029.8 L181.6 1033 L184.6 1029.8 M169.8 1035 L166.8 1031.8 L163.8 1035"/>
  <circle cx="210" cy="1026.4" r="2.8"/><circle cx="210" cy="1038.4" r="2.8"/><circle cx="220.8" cy="1031.7" r="2.8"/>
  <path d="M210 1029.2 V1035.6 M215.2 1023.4 V1042.2 M220.8 1034.5 V1037 C220.8 1038.5 219.5 1039 217.5 1039 H215.2"/>
  <path d="M269.5 1024 C263 1024.5 258.5 1029 255 1034 L259.5 1038.5 C264.5 1035 269 1030.5 269.5 1024 Z"/>
  <path d="M257.5 1029 H252.8 L255.5 1033.5 M264.2 1036.2 V1041.3 L259.8 1038.8 M252.8 1038 V1041.3 H256"/>
  <path d="M273.8 1041 L277.5 1037.3 M276 1034 L281 1039 L285.5 1034.5 C287 1033 287 1031 285.5 1029.5 L284.5 1028.5 C283 1027 281 1027 279.5 1028.5 Z M284.5 1028.5 L289.8 1023.3 M286.7 1030.7 L290 1027.4"/>
  <path d="M416 1024 C413.2 1027 413.2 1032 416 1035 M412.7 1022.5 C408.8 1026.5 408.8 1032.5 412.7 1036.5 M425 1024 C427.8 1027 427.8 1032 425 1035 M428.3 1022.5 C432.2 1026.5 432.2 1032.5 428.3 1036.5" stroke-width="1.3"/>
  <path d="M420.5 1031 L415.8 1041.2 M420.5 1031 L425.2 1041.2 M417.4 1037 H423.6" stroke-width="1.4"/>
  <path d="M1667.6 1037.8 A7.9 7.9 0 1 1 1677.6 1037.8 M1669.6 1034.8 A4.4 4.4 0 1 1 1675.6 1034.8" stroke-width="1.4"/>
  <path d="M1820 1039.5 H1835.5 L1833.5 1036 V1031.5 C1833.5 1027 1831 1024 1827.7 1024 C1824.4 1024 1822 1027 1822 1031.5 V1036 Z"/>
 </g>
 <circle cx="420.5" cy="1029.3" r="1.5" fill="none" stroke="#cccccc" stroke-width="1.2"/>
 <circle cx="1672.6" cy="1031.5" r="1.9" fill="#cccccc"/>
 <rect x="1671.4" y="1033.5" width="2.4" height="8" rx="1" fill="#cccccc"/>
 <circle cx="263" cy="1030.5" r="1.6" fill="#cccccc"/>
 <circle cx="1831.8" cy="1027.2" r="3.8" fill="#cccccc"/>
 <path d="M1825.5 1040.5 a2.3 2.3 0 0 0 4.6 0 Z" fill="#cccccc"/>
 <path d="M1771 1036 C1771 1031 1773 1029 1774 1028.5 C1773.5 1025.5 1775.5 1024.3 1778 1024.3 C1780 1024.3 1781.2 1025 1781.5 1026 C1781.8 1025 1783 1024.3 1785 1024.3 C1787.5 1024.3 1789.5 1025.5 1789 1028.5 C1790 1029 1792.2 1031 1792.2 1036 C1792.2 1041 1787 1043 1781.5 1043 C1776 1043 1771 1041 1771 1036 Z" fill="#cccccc"/>
 <g fill="#181818"><ellipse cx="1777.8" cy="1028.3" rx="2.6" ry="2.3"/><ellipse cx="1785.2" cy="1028.3" rx="2.6" ry="2.3"/><rect x="1777.3" y="1034" width="1.8" height="4" rx=".8"/><rect x="1783.9" y="1034" width="1.8" height="4" rx=".8"/></g>
</svg>

<svg class="abs" style="left:0;top:0" width="80" height="1048" viewBox="0 0 80 1048">
 <g fill="none" stroke="#dcdcdc" stroke-width="2.2" stroke-linejoin="round">
  <path d="M30.5 102 H23 a2 2 0 0 0 -2 2 V120.5 a2 2 0 0 0 2 2 H40.5 a2 2 0 0 0 2 -2 V113.5"/>
  <path d="M32.5 88 H44.5 L51 94.5 V111.5 a2 2 0 0 1 -2 2 H32.5 a2 2 0 0 1 -2 -2 V90 a2 2 0 0 1 2 -2 Z"/>
  <path d="M44.5 88 V94.5 H51"/>
 </g>
 <g fill="none" stroke="#868686" stroke-width="2" stroke-linecap="round" stroke-linejoin="round">
  <circle cx="41.5" cy="171" r="11"/>
  <path d="M33.5 179 L21.5 193"/>
  <path d="M31 246 V232 L53.5 246 L40 255.5"/>
  <ellipse cx="28" cy="258" rx="5.6" ry="8"/>
  <path d="M22.5 255 H33.5 M19.5 252 L22.5 254 M36.5 252 L33.5 254 M19.5 264.5 L23 262 M36.5 264.5 L33 262 M19 258.5 H22.5 M33.5 258.5 H37"/>
  <circle cx="29.3" cy="308.5" r="4.5"/>
  <circle cx="45.3" cy="315.5" r="4.5"/>
  <circle cx="29.3" cy="333.5" r="4.5"/>
  <path d="M29.3 313 V329 M45.3 320 C45.3 325 41 326.5 36 326.5 C31.5 326.5 29.3 328 29.3 329"/>
  <path d="M34.5 396.5 V384 a1.5 1.5 0 0 0 -1.5 -1.5 H21 a1.5 1.5 0 0 0 -1.5 1.5 V408.5 a1.5 1.5 0 0 0 1.5 1.5 H41.5 M19.5 396.5 H41.5 M34.5 396.5 V410"/>
  <rect x="40" y="375.5" width="14.5" height="14.5" rx="2"/>
  <circle cx="37.2" cy="464.5" r="16.8" stroke-width="1.8"/>
  <path d="M34.4 456 V473.5 M34.4 456 L43.4 465.4"/>
  <circle cx="37" cy="536.5" r="16.8" stroke-width="1.8"/>
  <path d="M34.2 528 V545.5 M34.2 528 L42 536"/>
  <path d="M50 600 V594 H22.5 V613 H25.5 L27 619 L31 613 M33.5 607.5 H52.5 V619.5 H46 L42.5 623 L40 619.5 H33.5 Z"/>
  <circle cx="37" cy="907.5" r="17" stroke-width="1.8"/>
  <circle cx="37" cy="904" r="6.5"/>
  <path d="M25.5 920.5 C28 914.5 46 914.5 48.5 920.5"/>
 </g>
 <g fill="#868686">
  <circle cx="34.4" cy="456" r="3.3"/><circle cx="43.4" cy="465.4" r="3.3"/><circle cx="34.4" cy="473.5" r="3.3"/>
  <circle cx="34.2" cy="528" r="3.3"/><circle cx="34.2" cy="545.5" r="3.3"/>
 </g>
 <circle cx="45.4" cy="545.2" r="6.8" fill="#181818"/><circle cx="45.4" cy="545.2" r="5" fill="none" stroke="#868686" stroke-width="2.4"/><circle cx="45.4" cy="545.2" r="2.3" fill="#868686"/><path d="M49 549 L51.5 551.5" stroke="#868686" stroke-width="2" stroke-linecap="round"/>
 <path d="M32.71 968.26 L33.72 963.83 L40.28 963.83 L41.29 968.26 L42.27 968.67 L46.12 966.25 L50.75 970.88 L48.33 974.73 L48.74 975.71 L53.17 976.72 L53.17 983.28 L48.74 984.29 L48.33 985.27 L50.75 989.12 L46.12 993.75 L42.27 991.33 L41.29 991.74 L40.28 996.17 L33.72 996.17 L32.71 991.74 L31.73 991.33 L27.88 993.75 L23.25 989.12 L25.67 985.27 L25.26 984.29 L20.83 983.28 L20.83 976.72 L25.26 975.71 L25.67 974.73 L23.25 970.88 L27.88 966.25 L31.73 968.67 Z" fill="none" stroke="#868686" stroke-width="2" stroke-linejoin="round"/>
 <circle cx="37" cy="980" r="4.5" fill="none" stroke="#868686" stroke-width="2"/>
 <g fill="#0078d4"><circle cx="49" cy="404.5" r="12"/><circle cx="49" cy="920" r="12"/><circle cx="49" cy="992" r="12"/></g>
 <g fill="#ffffff" font-family="Liberation Sans" font-weight="bold" font-size="15" text-anchor="middle">
  <text x="49" y="410">2</text><text x="49" y="925.5">1</text><text x="49" y="997.5">1</text>
 </g>
</svg>
</body></html>
